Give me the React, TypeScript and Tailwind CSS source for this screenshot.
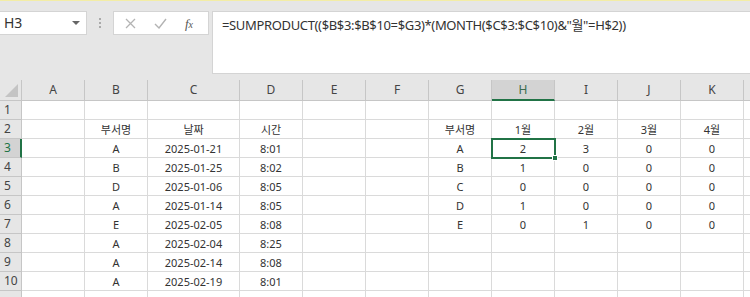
import React from "react";

const cols = ["A", "B", "C", "D", "E", "F", "G", "H", "I", "J", "K", "L"];
const widths = [63, 63, 92, 63, 63, 63, 63, 63, 63, 63, 63, 40];

const data: Record<number, Record<string, string>> = {
  2: { B: "부서명", C: "날짜", D: "시간", G: "부서명", H: "1월", I: "2월", J: "3월", K: "4월" },
  3: { B: "A", C: "2025-01-21", D: "8:01", G: "A", H: "2", I: "3", J: "0", K: "0" },
  4: { B: "B", C: "2025-01-25", D: "8:02", G: "B", H: "1", I: "0", J: "0", K: "0" },
  5: { B: "D", C: "2025-01-06", D: "8:05", G: "C", H: "0", I: "0", J: "0", K: "0" },
  6: { B: "A", C: "2025-01-14", D: "8:05", G: "D", H: "1", I: "0", J: "0", K: "0" },
  7: { B: "E", C: "2025-02-05", D: "8:08", G: "E", H: "0", I: "1", J: "0", K: "0" },
  8: { B: "A", C: "2025-02-04", D: "8:25" },
  9: { B: "A", C: "2025-02-14", D: "8:08" },
  10: { B: "A", C: "2025-02-19", D: "8:01" },
};

const font = { fontFamily: '"Noto Sans", "Noto Sans CJK KR", sans-serif' };

export default function App() {
  const rows = [1, 2, 3, 4, 5, 6, 7, 8, 9, 10, 11];
  return (
    <div className="w-[750px] h-[297px] overflow-hidden bg-[#e6e6e6] relative" style={font}>
      <div className="h-[1px] bg-[#f3eda6]" />
      <div className="h-[79px] flex items-start pt-[10px]">
        <div className="w-[87px] h-[24px] bg-white border border-[#d4d4d4] border-l-0 flex items-center justify-between pl-[4px] pr-[6px]">
          <span className="text-[14px] text-[#333] leading-none">H3</span>
          <svg width="8" height="5" viewBox="0 0 8 5"><path d="M0 0 L8 0 L4 4 Z" fill="#666" /></svg>
        </div>
        <div className="w-[26px] h-[24px] flex flex-col items-center justify-center gap-[2px]">
          <div className="w-[2px] h-[2px] bg-[#aaa]" />
          <div className="w-[2px] h-[2px] bg-[#aaa]" />
          <div className="w-[2px] h-[2px] bg-[#aaa]" />
        </div>
        <div className="w-[96px] h-[24px] bg-white border border-[#d4d4d4] flex items-center">
          <div className="w-[32px] flex justify-center">
            <svg width="11" height="11" viewBox="0 0 11 11"><path d="M1 1 L10 10 M10 1 L1 10" stroke="#b3b3b3" strokeWidth="1.3" /></svg>
          </div>
          <div className="w-[28px] flex justify-center">
            <svg width="13" height="11" viewBox="0 0 13 11"><path d="M1 6 L5 10 L12 1" stroke="#b3b3b3" strokeWidth="1.4" fill="none" /></svg>
          </div>
          <div className="w-[30px] flex justify-center">
            <span className="italic text-[13px] text-[#555] leading-none" style={{ fontFamily: '"Liberation Serif", serif' }}>
              f<span className="text-[10px]">x</span>
            </span>
          </div>
        </div>
        <div className="ml-[3px] flex-1 h-[63px] bg-white border border-[#d4d4d4] border-r-0 pl-[9px]">
          <span
            className="text-[13px] tracking-[-0.35px] text-[#333] leading-[20px] whitespace-nowrap"
            style={{ fontFamily: '"Noto Sans", "Noto Sans CJK KR", sans-serif' }}
          >
            =SUMPRODUCT(($B$3:$B$10=$G3)*(MONTH($C$3:$C$10)&amp;"월"=H$2))
          </span>
        </div>
      </div>
      <div
        className="grid bg-white"
        style={{ gridTemplateColumns: `22px ${widths.map((w) => w + "px").join(" ")}`, gridTemplateRows: `21px repeat(11, 19px)` }}
      >
        <div className="bg-[#e6e6e6] border-r border-b border-[#c6c6c6] relative">
          <svg className="absolute right-[3px] bottom-[3px]" width="13" height="13" viewBox="0 0 13 13"><path d="M13 0 L13 13 L0 13 Z" fill="#c4c4c4" /></svg>
        </div>
        {cols.map((c) => (
          <div
            key={c}
            className={
              c === "H"
                ? "bg-[#d3d3d3] border-r border-[#c6c6c6] border-b-2 border-b-[#217346] flex items-center justify-center text-[12px] text-[#3b6b4e]"
                : "bg-[#e6e6e6] border-r border-b border-[#c6c6c6] flex items-center justify-center text-[12px] text-[#444]"
            }
          >
            {c === "L" ? "" : c}
          </div>
        ))}
        {rows.map((r) => (
          <React.Fragment key={r}>
            <div
              className={
                r === 3
                  ? "bg-[#d3d3d3] border-b border-[#c6c6c6] border-r-2 border-r-[#217346] flex items-center pl-[4px] text-[12px] text-[#217346]"
                  : "bg-[#e6e6e6] border-r border-b border-[#c6c6c6] flex items-center pl-[4px] text-[12px] text-[#444]"
              }
            >
              {r <= 10 ? r : ""}
            </div>
            {cols.map((c) => (
              <div key={c} className="border-r border-b border-[#dadada] flex items-center justify-center text-[11px] text-[#333] leading-none whitespace-nowrap">
                {data[r]?.[c] ?? ""}
              </div>
            ))}
          </React.Fragment>
        ))}
      </div>
      <div className="absolute left-[491px] top-[138px] w-[65px] h-[21px] border-2 border-[#217346] pointer-events-none">
        <div className="absolute right-[-4px] bottom-[-4px] w-[6px] h-[6px] bg-[#217346] border border-white" />
      </div>
    </div>
  );
}
